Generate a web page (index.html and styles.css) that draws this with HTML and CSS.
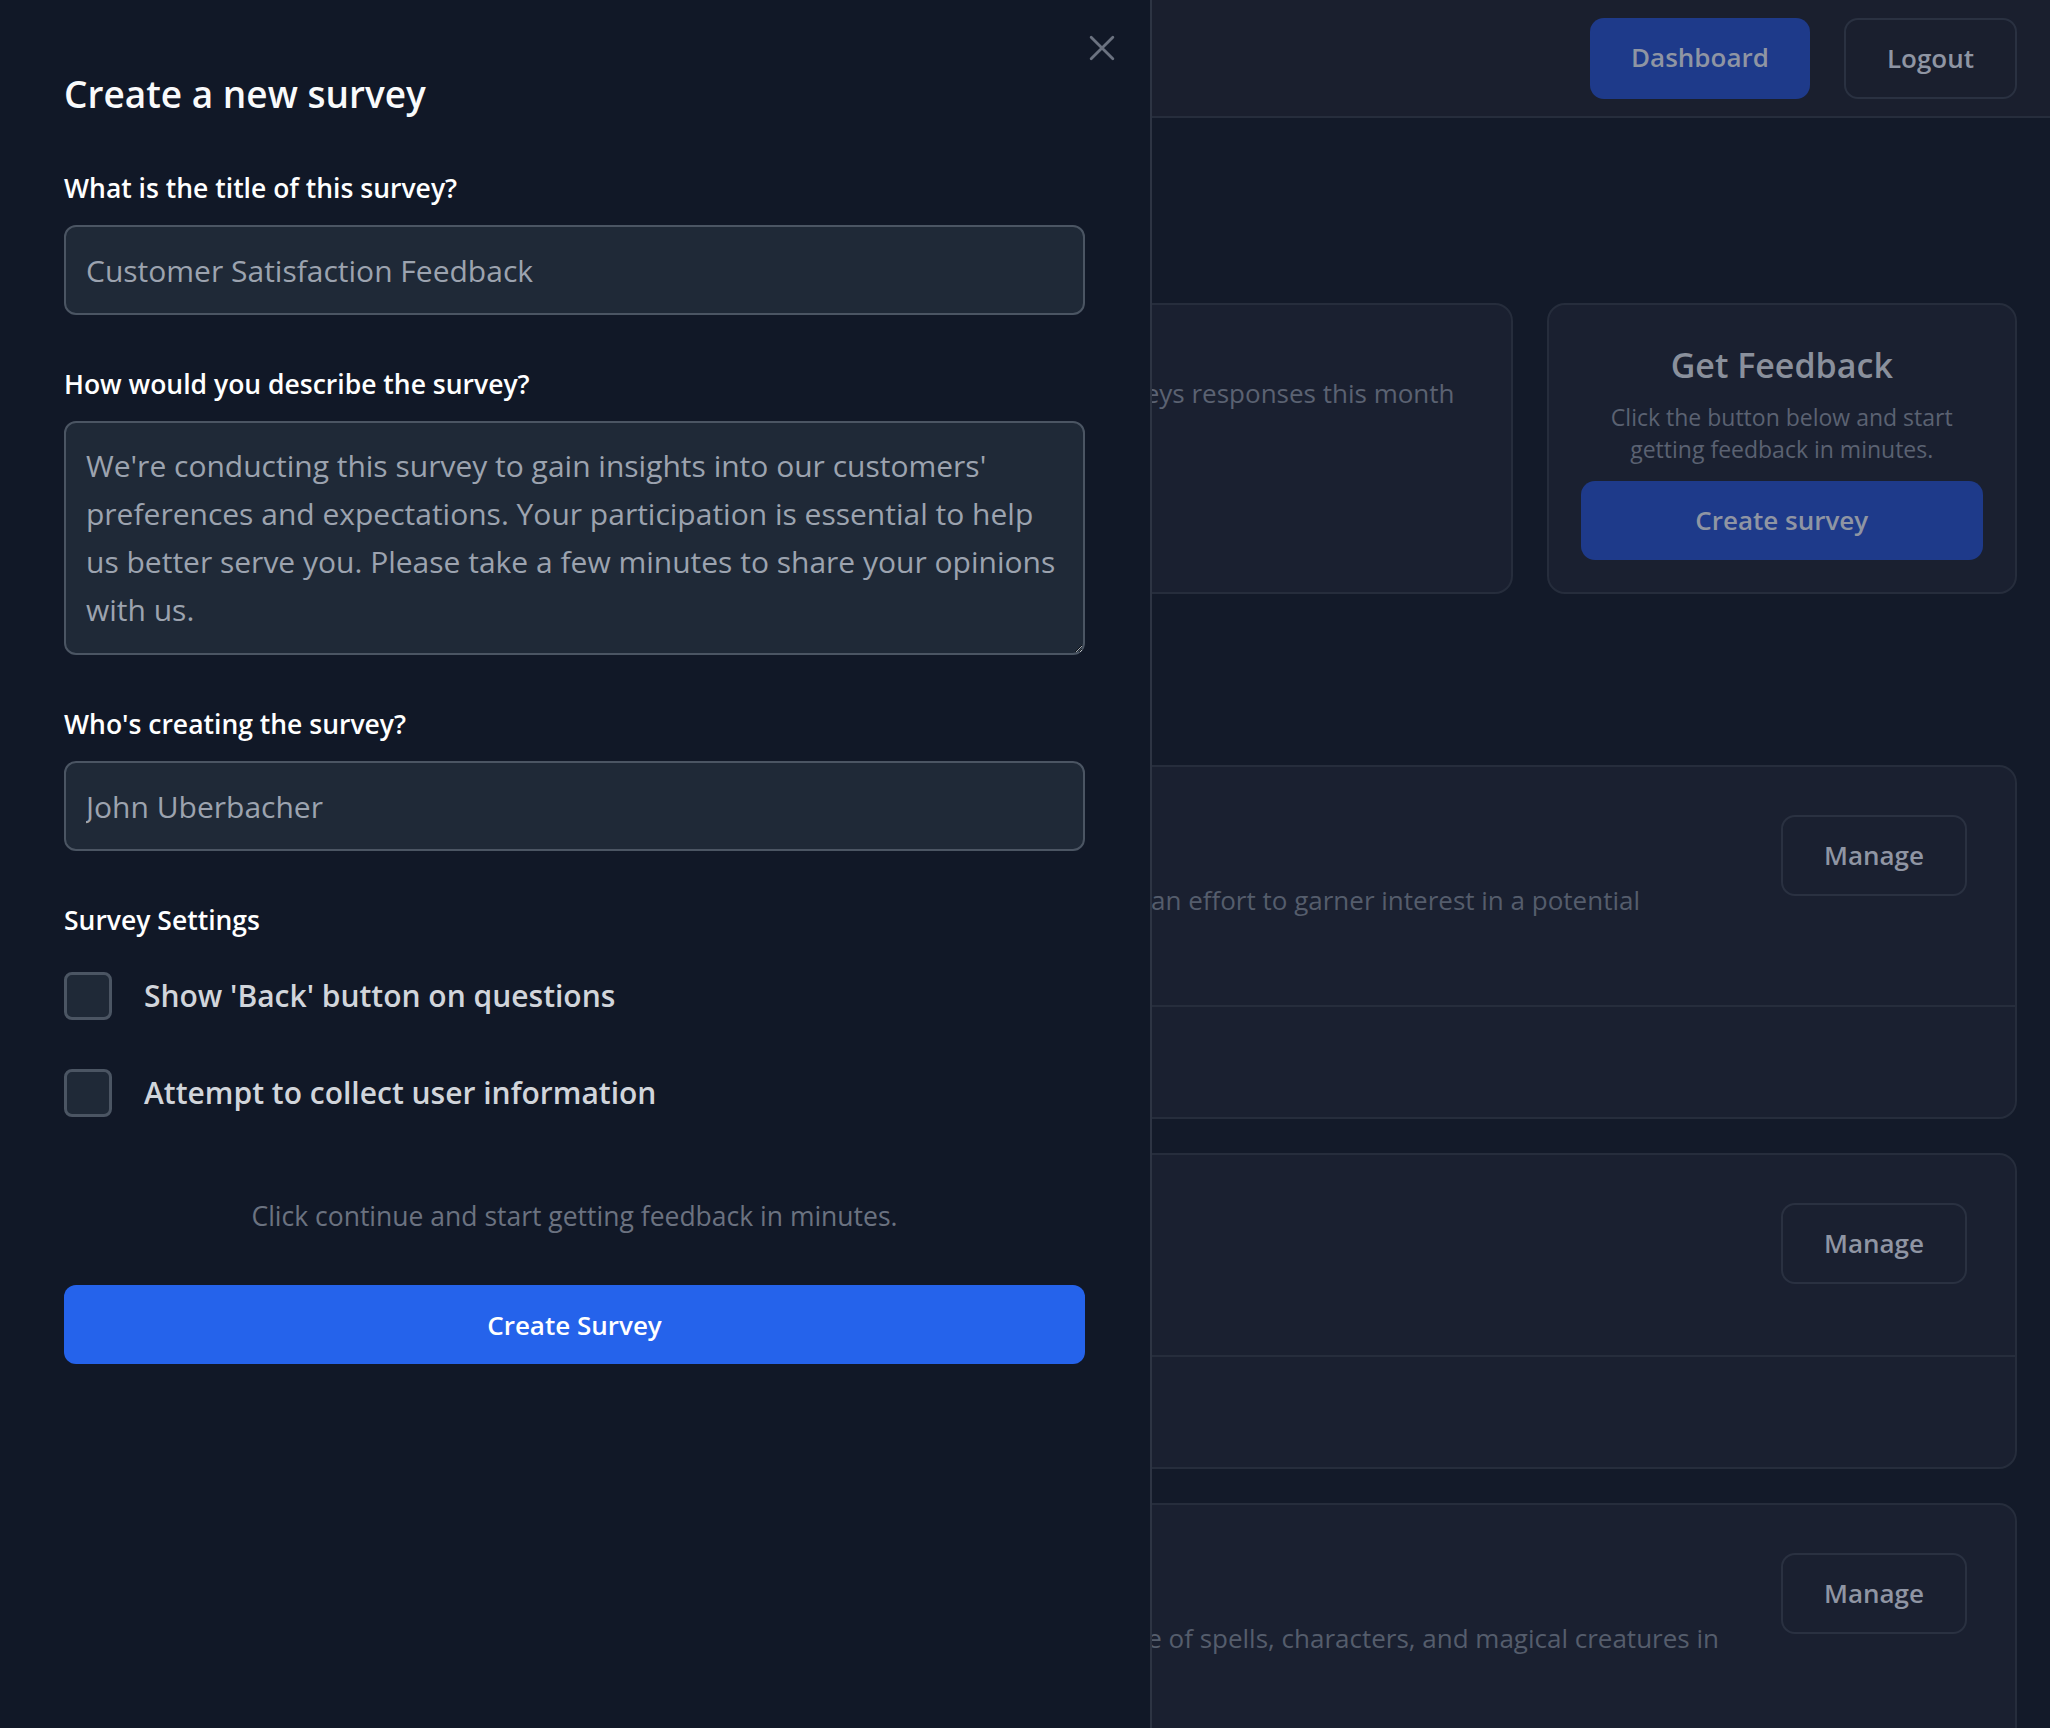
FILE: index.html
```html
<!DOCTYPE html>
<html lang="en">
<head>
    <meta charset="UTF-8">
    <meta name="viewport" content="width=device-width, initial-scale=1.0">
    <title>Surveys - Dashboard</title>
    <link rel="stylesheet" href="styles.css">
</head>
<body>
    <div class="page">
        <header class="topbar">
            <nav class="topbar_actions">
                <a href="#" class="btn btn_primary">Dashboard</a>
                <a href="#" class="btn btn_outline">Logout</a>
            </nav>
        </header>

        <main class="content">
            <div class="stats">
                <div class="card stat_card">
                    <p class="stat_text">128 surveys responses this month</p>
                </div>
                <div class="card cta_card">
                    <h2>Get Feedback</h2>
                    <p>Click the button below and start getting feedback in minutes.</p>
                    <a href="#" class="btn btn_primary btn_block">Create survey</a>
                </div>
            </div>

            <div class="survey_list">
                <div class="survey_card">
                    <div class="survey_main">
                        <div class="survey_info">
                            <p class="survey_desc two_line">
                                <span class="desc_line gap_lg">conducted in an effort to garner interest in a potential</span>
                            </p>
                        </div>
                        <a href="#" class="btn btn_outline">Manage</a>
                    </div>
                    <div class="survey_foot"></div>
                </div>

                <div class="survey_card">
                    <div class="survey_main">
                        <div class="survey_info">
                            <p class="survey_desc"></p>
                        </div>
                        <a href="#" class="btn btn_outline">Manage</a>
                    </div>
                    <div class="survey_foot"></div>
                </div>

                <div class="survey_card">
                    <div class="survey_main">
                        <div class="survey_info">
                            <p class="survey_desc two_line">
                                <span class="desc_line gap_sm">knowledge of spells, characters, and magical creatures in</span>
                            </p>
                        </div>
                        <a href="#" class="btn btn_outline">Manage</a>
                    </div>
                    <div class="survey_foot"></div>
                </div>
            </div>
        </main>
    </div>

    <aside class="drawer">
        <button class="close_btn" aria-label="Close">
            <svg width="26" height="26" viewBox="0 0 24 24" fill="none" stroke="currentColor" stroke-width="2.6" stroke-linecap="round">
                <path d="M2 2L22 22M22 2L2 22"/>
            </svg>
        </button>

        <h2 class="drawer_title">Create a new survey</h2>

        <form class="survey_form">
            <div class="field">
                <label for="title">What is the title of this survey?</label>
                <input type="text" id="title" placeholder="Customer Satisfaction Feedback">
            </div>

            <div class="field">
                <label for="description">How would you describe the survey?</label>
                <textarea id="description" rows="4">We're conducting this survey to gain insights into our customers'
preferences and expectations. Your participation is essential to help
us better serve you. Please take a few minutes to share your opinions
with us.</textarea>
            </div>

            <div class="field">
                <label for="author">Who's creating the survey?</label>
                <input type="text" id="author" placeholder="John Uberbacher">
            </div>

            <div class="settings">
                <h4>Survey Settings</h4>
                <label class="option">
                    <input type="checkbox">
                    <span>Show 'Back' button on questions</span>
                </label>
                <label class="option">
                    <input type="checkbox">
                    <span>Attempt to collect user information</span>
                </label>
            </div>

            <p class="form_hint">Click continue and start getting feedback in minutes.</p>

            <button type="submit" class="submit_btn">Create Survey</button>
        </form>
    </aside>
</body>
</html>
```

FILE: styles.css
```css
*{
    box-sizing: border-box;
}
body{
    margin: 0;
    background-color: #131a29;
    font-family: "Open Sans", "Noto Sans", sans-serif;
    color: #8f95a3;
}
a{
    text-decoration: none;
}

/* background page (dimmed behind the drawer) */
.topbar{
    height: 118px;
    display: flex;
    align-items: center;
    justify-content: flex-end;
    padding: 0 33px;
    background-color: #1a1f2e;
    border-bottom: 2px solid #262d3c;
}
.topbar_actions{
    display: flex;
    gap: 34px;
}
.btn{
    display: inline-block;
    padding: 20px 41px;
    font-size: 26px;
    font-weight: 600;
    line-height: 39px;
    border-radius: 14px;
    color: #8f95a3;
    text-align: center;
}
.btn_primary{
    background-color: #1e3a8a;
}
.btn_outline{
    padding: 19px 41px;
    border: 2px solid #2a3141;
}
.btn_block{
    display: block;
}

.content{
    padding: 185px 33px 60px;
}
.stats{
    display: grid;
    grid-template-columns: repeat(4, 1fr);
    gap: 34px;
}
.card{
    background-color: #1a2030;
    border: 2px solid #262d3c;
    border-radius: 18px;
}
.stat_card{
    grid-column: span 3;
    padding: 68px 56px;
}
.stat_text{
    margin: 0;
    text-align: right;
    font-size: 26px;
    line-height: 40px;
    color: #5b6272;
    white-space: nowrap;
}
.cta_card{
    padding: 32px;
    text-align: center;
}
.cta_card h2{
    margin: 0;
    font-size: 34px;
    font-weight: 600;
    line-height: 56px;
    color: #8a909c;
}
.cta_card p{
    margin: 8px 20px 16px;
    font-size: 23px;
    line-height: 32px;
    color: #5b6272;
}

.survey_list{
    margin-top: 171px;
    display: flex;
    flex-direction: column;
    gap: 34px;
}
.survey_card{
    background-color: #1a2030;
    border: 2px solid #262d3c;
    border-radius: 18px;
}
.survey_main{
    display: flex;
    align-items: flex-start;
    padding: 48px;
}
.survey_info{
    flex: 1;
    padding-top: 66px;
}
.survey_desc{
    margin: 0;
    min-height: 38px;
    font-size: 26px;
    line-height: 38px;
    color: #555d6c;
}
.survey_desc.two_line{
    min-height: 76px;
}
.desc_line{
    display: block;
    text-align: right;
    white-space: nowrap;
}
.gap_lg{
    margin-right: 141px;
}
.gap_sm{
    margin-right: 62px;
}
.survey_foot{
    height: 112px;
    border-top: 2px solid #262d3c;
}

/* drawer */
.drawer{
    position: fixed;
    top: 0;
    left: 0;
    bottom: 0;
    width: 1152px;
    padding: 66px 65px 0 64px;
    background-color: #111827;
    border-right: 2px solid #2d3443;
}
.close_btn{
    position: absolute;
    top: 35px;
    right: 35px;
    padding: 0;
    border: none;
    background: none;
    color: #6b7280;
    display: flex;
}
.drawer_title{
    margin: 0 0 48px;
    font-size: 37px;
    font-weight: 600;
    line-height: 56px;
    color: #f9fafb;
}
.survey_form{
    display: flex;
    flex-direction: column;
    gap: 51px;
}
.field{
    display: flex;
    flex-direction: column;
    gap: 19px;
}
.field label, .settings h4{
    margin: 0;
    font-size: 26.5px;
    font-weight: 600;
    line-height: 36px;
    color: #ffffff;
}
.field input, .field textarea{
    width: 100%;
    font-family: inherit;
    font-size: 30px;
    color: #9ca3af;
    background-color: #1f2937;
    border: 2px solid #4b5563;
    border-radius: 12px;
    outline: none;
}
.field input{
    height: 90px;
    padding: 0 20px;
}
.field input::placeholder{
    color: #9ca3af;
}
.field textarea{
    height: 234px;
    padding: 19px 20px;
    line-height: 48px;
    white-space: pre;
    overflow: hidden;
    resize: vertical;
}
.settings{
    display: flex;
    flex-direction: column;
    gap: 49px;
}
.settings h4{
    margin-bottom: -15px;
}
.option{
    display: flex;
    align-items: center;
    gap: 32px;
    font-size: 30px;
    font-weight: 600;
    line-height: 48px;
    color: #d1d5db;
}
.option input{
    appearance: none;
    margin: 0;
    width: 48px;
    height: 48px;
    background-color: #1f2937;
    border: 3px solid #4b5563;
    border-radius: 8px;
}
.form_hint{
    margin: 30px 0 0;
    text-align: center;
    font-size: 26.5px;
    line-height: 36px;
    color: #6b7280;
}
.submit_btn{
    height: 79px;
    font-family: inherit;
    font-size: 26px;
    font-weight: 600;
    color: #ffffff;
    background-color: #2563eb;
    border: none;
    border-radius: 12px;
}
```
